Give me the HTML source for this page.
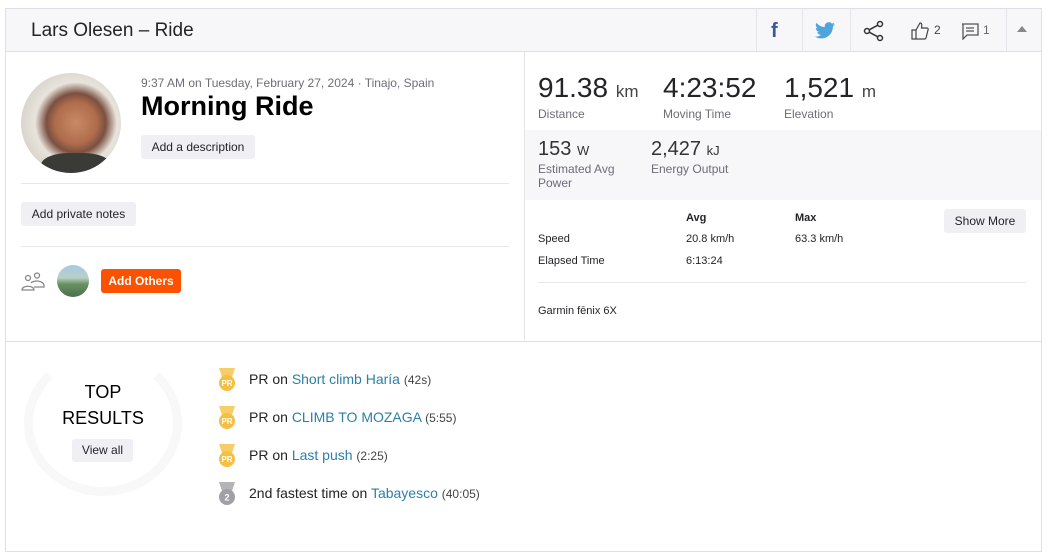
<!DOCTYPE html>
<html><head><meta charset="utf-8"><style>
*{box-sizing:border-box;margin:0;padding:0}
body{width:1050px;height:557px;background:#fff;font-family:"Liberation Sans",sans-serif;color:#242428;position:relative;overflow:hidden}
.abs{position:absolute}
.box{left:5px;top:8px;width:1037px;height:544px;border:1px solid #dfdfe8}
.hdr{left:6px;top:9px;width:1035px;height:43px;background:#f7f7fa;border-bottom:1px solid #dfdfe8}
.sep{position:absolute;top:0;width:1px;height:43px;background:#e4e4ea}
.btn{position:absolute;background:#efeff4;border-radius:3px;font-size:12px;color:#242428;text-align:center}
.lbl{font-size:12px;color:#6d6d78}
.big{font-size:28px;color:#242428}
.big small{font-size:17px;color:#444}
.hl{position:absolute;height:1px;background:#e6e6eb}
a{color:#2c7fa8;text-decoration:none}
.res{position:absolute;left:218px;font-size:14px;color:#242428}
.res span{font-size:12px;color:#444}
</style></head><body>
<div class="abs box"></div>
<div class="abs hdr">
<div class="abs" style="left:25px;top:11px;font-size:19px;color:#242428">Lars Olesen – Ride</div>
<div class="sep" style="left:750px"></div><div class="sep" style="left:796px"></div><div class="sep" style="left:844px"></div><div class="sep" style="left:1000px"></div>
<div class="abs" style="left:765px;top:11px;font-size:20px;font-weight:bold;color:#3b5998">f</div>
<svg class="abs" style="left:809px;top:13px" width="20" height="17" viewBox="0 0 24 20"><path d="M24 2.4a10 10 0 0 1-2.8.8A5 5 0 0 0 23.3.5a10 10 0 0 1-3.1 1.2A4.9 4.9 0 0 0 11.8 6 14 14 0 0 1 1.7.9a4.9 4.9 0 0 0 1.5 6.6A4.9 4.9 0 0 1 1 6.9a4.9 4.9 0 0 0 3.9 4.9 5 5 0 0 1-2.200.1 4.9 4.9 0 0 0 4.6 3.4A9.9 9.9 0 0 1 0 17.3 14 14 0 0 0 7.5 19.5c9.1 0 14-7.5 14-14v-.6A10 10 0 0 0 24 2.4z" fill="#4ea4dd"/></svg>
<svg class="abs" style="left:857px;top:11px" width="22" height="22" viewBox="0 0 22 22" fill="none" stroke="#333" stroke-width="1.5"><circle cx="4" cy="11" r="2.5"/><circle cx="17" cy="4" r="2.5"/><circle cx="17" cy="18" r="2.5"/><path d="M6.2 9.8 14.8 5.2M6.2 12.2 14.8 16.8"/></svg>
<svg class="abs" style="left:905px;top:13px" width="18" height="18" viewBox="0 0 18 18" fill="none" stroke="#444" stroke-width="1.2"><path d="M1 8h4v9H1zM5 8l4-7c2 0 2 2 1.5 5H16c1 0 1.5 1 1 2l-2 8c-.3.7-.8 1-1.5 1H5"/></svg>
<div class="abs" style="left:928px;top:14px;font-size:12px;color:#444">2</div>
<svg class="abs" style="left:955px;top:14px" width="18" height="17" viewBox="0 0 18 17" fill="none" stroke="#555" stroke-width="1.3"><path d="M1 1h16v11H6l-4 4V1z"/><path d="M5 5h8M5 8h8"/></svg>
<div class="abs" style="left:977px;top:14px;font-size:12px;color:#666">1</div>
<div class="abs" style="left:1011px;top:17px;width:0;height:0;border-left:5px solid transparent;border-right:5px solid transparent;border-bottom:6px solid #888"></div>
</div>
<div class="abs" style="left:524px;top:52px;width:1px;height:289px;background:#e4e4ea"></div>
<div class="hl" style="left:6px;top:341px;width:1035px;background:#dfdfe8"></div>
<!-- left -->
<div class="abs" style="left:21px;top:73px;width:100px;height:100px;border-radius:50%;background:radial-gradient(circle at 55% 50%,#c98a66 0,#b06c4c 28%,#7a5040 40%,#e8e4dc 55%,#d4d0c8 80%);overflow:hidden"><div class="abs" style="left:20px;top:80px;width:70px;height:30px;background:#3a3a36;border-radius:40%"></div></div>
<div class="abs" style="left:141px;top:76px;font-size:12px;color:#6d6d78">9:37 AM on Tuesday, February 27, 2024 · Tinajo, Spain</div>
<div class="abs" style="left:141px;top:91px;font-size:27px;font-weight:bold;color:#000">Morning Ride</div>
<div class="btn" style="left:141px;top:135px;width:114px;height:24px;line-height:24px">Add a description</div>
<div class="hl" style="left:21px;top:183px;width:488px"></div>
<div class="btn" style="left:21px;top:202px;width:115px;height:24px;line-height:24px">Add private notes</div>
<div class="hl" style="left:21px;top:246px;width:488px"></div>
<svg class="abs" style="left:21px;top:272px" width="24" height="20" viewBox="0 0 24 20" fill="none" stroke="#888" stroke-width="1.3"><circle cx="7" cy="6" r="2.5"/><circle cx="16" cy="3.5" r="2.5"/><path d="M1 18c0-5 12-5 12 0zM10 11c2-3 13-3 13 3v1H13"/></svg>
<div class="abs" style="left:57px;top:265px;width:32px;height:32px;border-radius:50%;background:linear-gradient(#a8c8e0 0,#b8d0c8 40%,#6a9060 60%,#4a7050 100%)"></div>
<div class="abs" style="left:101px;top:269px;width:80px;height:24px;line-height:24px;background:#fc5200;color:#fff;border-radius:3px;font-size:12px;font-weight:bold;text-align:center">Add Others</div>
<!-- right -->
<div class="abs big" style="left:538px;top:72px">91.38 <small>km</small></div>
<div class="abs lbl" style="left:538px;top:107px">Distance</div>
<div class="abs big" style="left:663px;top:72px">4:23:52</div>
<div class="abs lbl" style="left:663px;top:107px">Moving Time</div>
<div class="abs big" style="left:784px;top:72px">1,521 <small>m</small></div>
<div class="abs lbl" style="left:784px;top:107px">Elevation</div>
<div class="abs" style="left:525px;top:130px;width:516px;height:70px;background:#f7f7fa"></div>
<div class="abs" style="left:538px;top:138px;font-size:20px;color:#333">153 <span style="font-size:13px">W</span></div>
<div class="abs lbl" style="left:538px;top:162px;line-height:14px">Estimated Avg<br>Power</div>
<div class="abs" style="left:651px;top:138px;font-size:20px;color:#333">2,427 <span style="font-size:13px">kJ</span></div>
<div class="abs lbl" style="left:651px;top:162px">Energy Output</div>
<div class="abs" style="left:686px;top:212px;font-size:11px;font-weight:bold">Avg</div>
<div class="abs" style="left:795px;top:212px;font-size:11px;font-weight:bold">Max</div>
<div class="btn" style="left:944px;top:209px;width:82px;height:24px;line-height:24px">Show More</div>
<div class="abs" style="left:538px;top:233px;font-size:11px">Speed</div>
<div class="abs" style="left:686px;top:233px;font-size:11px">20.8 km/h</div>
<div class="abs" style="left:795px;top:233px;font-size:11px">63.3 km/h</div>
<div class="abs" style="left:538px;top:255px;font-size:11px">Elapsed Time</div>
<div class="abs" style="left:686px;top:255px;font-size:11px">6:13:24</div>
<div class="hl" style="left:538px;top:282px;width:488px"></div>
<div class="abs" style="left:538px;top:305px;font-size:11px">Garmin fēnix 6X</div>
<!-- bottom -->
<div class="abs" style="left:24px;top:350px;width:158px;height:146px;border-radius:50%;border:9px solid #f8f8f9;border-top-color:transparent"></div>
<div class="abs" style="left:40px;top:379px;width:126px;text-align:center;font-size:18px;line-height:26px;color:#000">TOP<br>RESULTS</div>
<div class="btn" style="left:72px;top:439px;width:61px;height:23px;line-height:23px">View all</div>
<svg width="0" height="0" style="position:absolute"><defs><g id="m"><path d="M2 1h16l-3 9H5z" fill="currentColor" opacity=".8"/><circle cx="10" cy="16" r="8" fill="currentColor"/></g></defs></svg>
<svg class="abs" style="left:217px;top:367px;color:#f5c042" width="20" height="25"><use href="#m"/><text x="10" y="19" font-size="8" fill="#fff" text-anchor="middle" font-family="Liberation Sans" font-weight="bold">PR</text></svg>
<svg class="abs" style="left:217px;top:405px;color:#f5c042" width="20" height="25"><use href="#m"/><text x="10" y="19" font-size="8" fill="#fff" text-anchor="middle" font-family="Liberation Sans" font-weight="bold">PR</text></svg>
<svg class="abs" style="left:217px;top:443px;color:#f5c042" width="20" height="25"><use href="#m"/><text x="10" y="19" font-size="8" fill="#fff" text-anchor="middle" font-family="Liberation Sans" font-weight="bold">PR</text></svg>
<svg class="abs" style="left:217px;top:481px;color:#a0a0a6" width="20" height="25"><use href="#m"/><text x="10" y="19.5" font-size="9" fill="#fff" text-anchor="middle" font-family="Liberation Sans" font-weight="bold">2</text></svg>
<div class="res" style="left:249px;top:371px">PR on <a>Short climb Haría</a> <span>(42s)</span></div>
<div class="res" style="left:249px;top:409px">PR on <a>CLIMB TO MOZAGA</a> <span>(5:55)</span></div>
<div class="res" style="left:249px;top:447px">PR on <a>Last push</a> <span>(2:25)</span></div>
<div class="res" style="left:249px;top:485px">2nd fastest time on <a>Tabayesco</a> <span>(40:05)</span></div>
</body></html>
